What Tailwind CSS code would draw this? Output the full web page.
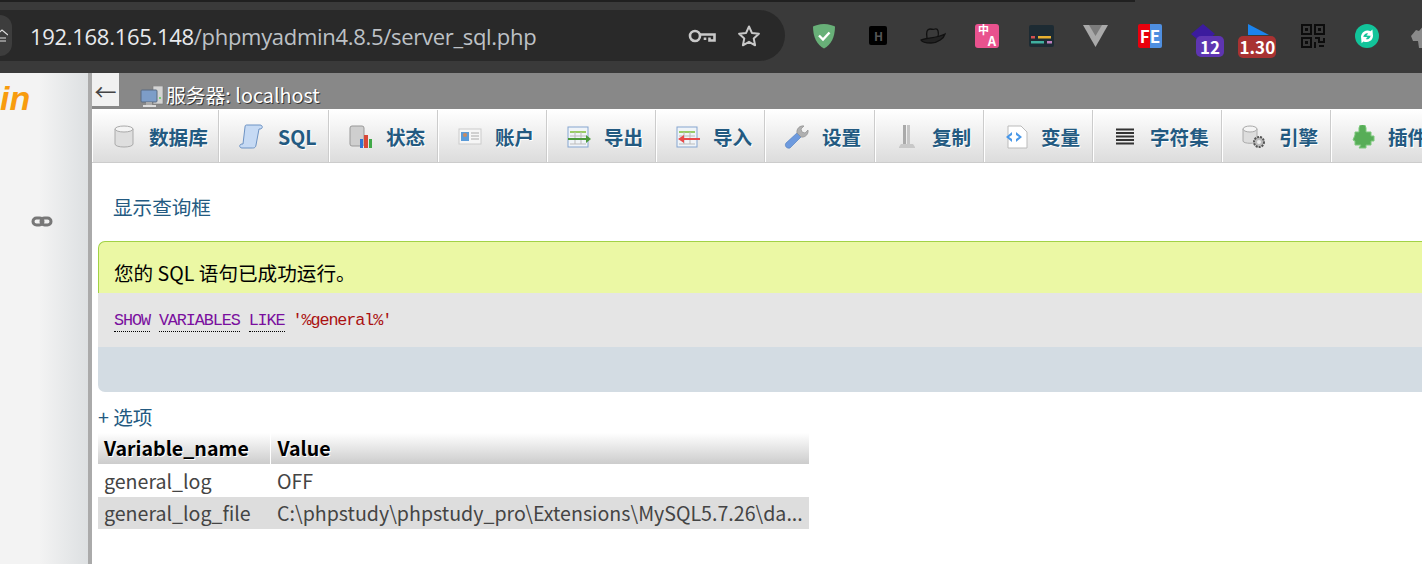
<!DOCTYPE html>
<html lang="zh-CN">
<head>
  <meta charset="UTF-8" />
  <title>phpMyAdmin - server_sql</title>
  <script src="https://cdn.jsdelivr.net/npm/@tailwindcss/browser@4"></script>
</head>
<body class="bg-white overflow-hidden font-['Noto_Sans_CJK_SC','Noto_Sans',sans-serif]">
<div class="flex flex-col w-[1422px] h-[564px] overflow-hidden">

  <!-- browser toolbar -->
  <header class="relative flex items-center shrink-0 h-[73px] bg-[#3a3a3a]">
    <div class="absolute top-0 left-0 w-[1135px] h-[2px] bg-[#202020]"></div>
    <div class="flex items-center shrink-0 w-[785px] h-[51px] -mt-[2px] rounded-r-[26px] bg-[#292929]">
      <div class="flex items-center justify-start shrink-0 w-[12px] h-[41px] rounded-r-full bg-[#3d3d3d] overflow-hidden">
        <svg width="8" height="16" viewBox="0 0 8 16" fill="none" stroke="#ddd" stroke-width="1.2"><path d="M-4 7 L2 2 L8 7M-2 10H6M-2 13H6"/></svg>
      </div>
      <div class="ml-[18px] text-[22px] leading-none tracking-[-0.3px] text-[#bdc1c6] font-['Open_Sans',sans-serif] whitespace-nowrap"><span class="text-[#e8eaed]">192.168.165.148</span>/phpmyadmin4.8.5/server_sql.php</div>
      <svg class="ml-auto" width="28" height="16" viewBox="0 0 28 16" fill="none" stroke="#c8c8c8" stroke-width="2.6"><circle cx="7" cy="8" r="5"/><path d="M12 6.500H26.500V12.500H21.500V9.500M17 9.500V12"/></svg>
      <svg class="ml-[21px] mr-[24px]" width="24" height="24" viewBox="0 0 24 24" fill="none" stroke="#c8c8c8" stroke-width="2" stroke-linejoin="round"><path d="M12 2.500l2.900 6.400 7 .8-5.200 4.700 1.400 6.900-6.100-3.500-6.100 3.500 1.400-6.900L2.100 9.700l7-.8z"/></svg>
    </div>

    <div class="flex items-center -mt-[2px] ml-[12px] shrink-0">
      <div class="flex justify-center w-[54.3px]">
        <svg width="24" height="26" viewBox="0 0 24 26"><path d="M12 1C7 1 3 2.500 1 3.500 1 14 5 22 12 25.500 19 22 23 14 23 3.500 21 2.500 17 1 12 1z" fill="#68b078"/><path d="M7 12.500l4 4 6.500-7" fill="none" stroke="#fff" stroke-width="2.400"/></svg>
      </div>
      <div class="flex justify-center w-[54.3px]">
        <div class="flex items-center justify-center w-[18px] h-[19px] rounded-[2px] bg-black text-[12px] leading-none font-bold text-[#555]">H</div>
      </div>
      <div class="flex justify-center w-[54.3px]">
        <svg width="26" height="18" viewBox="0 0 26 18" fill="none" stroke="#111" stroke-width="1.300"><path d="M7 11C6 5 7 2 10 2c2 0 3 1 5 0 3-1 4 3 3 8"/><path d="M1 13c4-2 17-2 24-6-1 4-7 9-14 9-5 0-9-1-10-3z" fill="#222"/></svg>
      </div>
      <div class="flex justify-center w-[54.3px]">
        <div class="flex flex-col justify-center w-[24px] h-[24px] px-[3px] rounded-[3px] bg-[#e9528e] text-white font-bold">
          <span class="self-start text-[11px] leading-[11px]">中</span>
          <span class="self-end text-[13px] leading-[12px]">A</span>
        </div>
      </div>
      <div class="flex justify-center w-[54.3px]">
        <svg width="25" height="22" viewBox="0 0 25 22"><rect width="25" height="22" rx="2" fill="#1d2b33"/><rect x="2" y="11" width="4" height="2.500" fill="#d05050"/><rect x="9" y="11" width="13" height="2.500" fill="#e8b030"/><rect x="2" y="16" width="13" height="2.500" fill="#40b0a0"/><rect x="18" y="16" width="5" height="2.500" fill="#c080c0"/></svg>
      </div>
      <div class="flex justify-center w-[54.3px]">
        <svg width="25" height="23" viewBox="0 0 25 23"><path d="M0 1H25L12.500 23z" fill="#a9a9a9"/><path d="M6 1H19L12.500 12z" fill="#7c7c7c"/></svg>
      </div>
      <div class="flex justify-center w-[54.3px]">
        <div class="flex items-center justify-center w-[24px] h-[24px] rounded-[2px] bg-[linear-gradient(90deg,#e8000d_50%,#4f8fe0_50%)] text-white text-[17px] leading-none font-bold">FE</div>
      </div>
      <div class="relative flex justify-center items-start w-[54.3px] h-[24px]">
        <svg class="mr-[3px]" width="24" height="20" viewBox="0 0 24 20"><path d="M12 0L24 10 12 20 0 10z" fill="#3b1b9e"/></svg>
        <span class="absolute left-[19px] top-[12px] flex items-center justify-center w-[28px] h-[21px] rounded-[5px] bg-[#5e35b1] text-white text-[17px] leading-none font-bold">12</span>
      </div>
      <div class="relative flex justify-center items-start w-[54.3px] h-[24px]">
        <svg width="21" height="12" viewBox="0 0 21 12"><path d="M0 0L21 11H0z" fill="#1b84ee"/></svg>
        <span class="absolute left-[7px] top-[12px] flex items-center justify-center w-[38px] h-[22px] rounded-[5px] bg-[#a83232] text-white text-[17px] leading-none font-bold">1.30</span>
      </div>
      <div class="flex justify-center w-[54.3px]">
        <svg width="24" height="24" viewBox="0 0 24 24" fill="none" stroke="#0c0c0c" stroke-width="2"><rect x="1" y="1" width="9" height="9"/><rect x="14" y="1" width="9" height="9"/><rect x="1" y="14" width="9" height="9"/><path d="M14 14h4v4h5v-4M14 18v6M18 22h5" /><rect x="4" y="4" width="3" height="3" fill="#0c0c0c" stroke="none"/><rect x="17" y="4" width="3" height="3" fill="#0c0c0c" stroke="none"/><rect x="4" y="17" width="3" height="3" fill="#0c0c0c" stroke="none"/></svg>
      </div>
      <div class="flex justify-center w-[54.3px]">
        <svg width="24" height="24" viewBox="0 0 20 20"><circle cx="10" cy="10" r="10" fill="#12c49a"/><path d="M5 11a5.500 5.500 0 0 1 8-5l1.500-1.500 .5 5.500-5.500-.5 1.500-1.500a3 3 0 0 0-4 2.500zM15 9.500a5.500 5.500 0 0 1-8 5L5.500 16l-.5-5.500 5.500.5L9 12.500a3 3 0 0 0 4-2.500z" fill="#fff"/></svg>
      </div>
      <div class="flex justify-center w-[54.3px]">
        <svg width="22" height="24" viewBox="0 0 22 24"><path d="M1 12L6 6 9 7 14 1 15 6 21 10 20 24H9L8 17 3 17z" fill="#8a8a8a"/></svg>
      </div>
    </div>
  </header>

  <div class="flex flex-1 min-h-0">
    <!-- navigation panel -->
    <aside class="relative shrink-0 w-[92px] border-r-[4px] border-r-[#aaa] bg-[linear-gradient(90deg,#f3f3f3_45%,#dde0e2_100%)]">
      <div class="absolute left-0 top-[7px] text-[34px] leading-[36px] font-bold italic text-[#f89c0e] font-['Liberation_Sans',sans-serif]">in</div>
      <svg class="absolute left-[31px] top-[143px]" width="22" height="11" viewBox="0 0 22 11" fill="none" stroke="#777" stroke-width="3"><rect x="2" y="2" width="10" height="7" rx="3.500"/><rect x="10" y="2" width="10" height="7" rx="3.500"/></svg>
    </aside>

    <main class="flex-1 min-w-0 overflow-hidden">
      <!-- server breadcrumb -->
      <div class="flex h-[36px] bg-[#888]">
        <div class="flex items-center justify-center w-[27px] h-[33px] bg-[#f1f1f1] text-[#444] text-[22px] leading-none">←</div>
        <div class="flex items-end ml-[21px]">
          <svg class="mb-[1px] mr-[2px]" width="24" height="22" viewBox="0 0 24 22"><rect x="13" y="0" width="10" height="18" fill="#d4d4d4" stroke="#777" stroke-width=".6"/><circle cx="20" cy="12" r="1" fill="#5c5"/><rect x="1" y="4" width="16" height="12" rx="1" fill="#7d9dc8" stroke="#5a6b80"/><rect x="6" y="16" width="6" height="3" fill="#aaa"/><rect x="3" y="19" width="13" height="2" fill="#ddd"/></svg>
          <span class="text-[19.800px] leading-[29px] text-white [text-shadow:1px_1px_0_#333]">服务器: localhost</span>
        </div>
      </div>

      <!-- top menu -->
      <nav id="topmenu" class="flex mt-[1px] h-[53px] border-b border-b-[#ccc] bg-[linear-gradient(#fff,#dcdcdc)] text-[19.600px] font-bold text-[#235a81] [text-shadow:1px_1px_0_#fff] whitespace-nowrap"></nav>

      <div class="pl-[6px]">
        <a class="block mt-[30px] ml-[15px] text-[19.600px] leading-[28px] text-[#235a81]">显示查询框</a>

        <!-- success message -->
        <div class="mt-[20px] w-[1400px]">
          <div class="flex items-center h-[52px] pl-[15px] pt-[10px] rounded-tl-[7px] border-t border-l border-[#a2d246] bg-[#ebf8a4] text-[19.600px] text-black">您的 SQL 语句已成功运行。</div>
          <div class="flex items-center gap-[9px] h-[54px] pl-[16px] pt-[1px] bg-[#e5e5e5] font-['Liberation_Mono','DejaVu_Sans_Mono',monospace] text-[16.800px] text-[#7a0f9e] tracking-[-1.100px]">
            <span class="border-b border-dotted border-black leading-[21px]">SHOW</span>
            <span class="border-b border-dotted border-black leading-[21px]">VARIABLES</span>
            <span class="border-b border-dotted border-black leading-[21px]">LIKE</span>
            <span class="-ml-[1px] text-[#aa1111]">'%general%'</span>
          </div>
          <div class="h-[45px] rounded-bl-[7px] bg-[#d3dce3]"></div>
        </div>

        <a class="block mt-[11px] text-[19.600px] leading-[28px] text-[#235a81]">+ 选项</a>

        <!-- result table -->
        <table class="w-[711px] mt-[2px] border-collapse text-[19.600px]">
          <thead>
            <tr class="h-[31px] bg-[linear-gradient(#fff,#ccc)] text-black text-left [text-shadow:1px_1px_0_#fff]">
              <th class="w-[172px] pl-[6px] pb-[1px] border-r-[1px] border-r-white font-bold leading-[26px]">Variable_name</th>
              <th class="pl-[7px] pb-[1px] font-bold leading-[26px]">Value</th>
            </tr>
          </thead>
          <tbody class="text-[#444]">
            <tr class="h-[33px] bg-white">
              <td class="pl-[6px] pt-[1px] leading-[26px]">general_log</td>
              <td class="pl-[7px] pt-[1px] leading-[26px]">OFF</td>
            </tr>
            <tr class="h-[32px] bg-[#ddd]">
              <td class="pl-[6px] leading-[26px]">general_log_file</td>
              <td class="pl-[7px] leading-[26px] whitespace-nowrap">C:\phpstudy\phpstudy_pro\Extensions\MySQL5.7.26\da...</td>
            </tr>
          </tbody>
        </table>
      </div>
    </main>
  </div>
</div>

<script>
  const tabs = [
    [127, '数据库', 12, '<svg width="20" height="23" viewBox="0 0 20 23"><path d="M1 4v15c0 4 18 4 18 0V4z" fill="#dedede" stroke="#aaa"/><ellipse cx="10" cy="4" rx="9" ry="3" fill="#f4f4f4" stroke="#aaa"/></svg>'],
    [110, 'SQL', 14, '<svg width="24" height="25" viewBox="0 0 24 25"><path d="M6 3C6 1 7 1 8 1H21C24 1 24 5 21 5H20L17 21C16.500 24 15 24 13 24H3C0 24 0 20 3 20H4z" fill="#c6daf4" stroke="#6d93c4"/></svg>'],
    [109, '状态', 12, '<svg width="24" height="24" viewBox="0 0 24 24"><rect x="1" y="1" width="14" height="20" rx="2" fill="#cfcfcf" stroke="#999"/><rect x="11" y="14" width="3" height="9" fill="#3273d6"/><rect x="15" y="10" width="4" height="13" fill="#d84838"/><rect x="20" y="14" width="3" height="9" fill="#41a948"/></svg>'],
    [109, '账户', 12, '<svg width="24" height="18" viewBox="0 0 24 18"><rect x="1" y="1" width="22" height="15" fill="#f6f6f6" stroke="#ccc"/><rect x="3" y="4" width="8" height="9" fill="#5b9bd8"/><circle cx="7" cy="7" r="2" fill="#c98a60"/><path d="M13 5h8M13 8h8M13 11h8" stroke="#aaa"/></svg>'],
    [109, '导出', 12, '<svg width="24" height="22" viewBox="0 0 24 22"><rect x="1" y="1" width="20" height="20" fill="#f0f4f8" stroke="#85a5d0"/><path d="M3 6h16" stroke="#9c6" stroke-width="2"/><path d="M3 10h16M3 18h16M8 6v12M14 6v12" stroke="#bbb"/><path d="M1 12h18V9l5 4-5 4v-3H1z" fill="#4c9a3c"/></svg>'],
    [109, '导入', 12, '<svg width="24" height="22" viewBox="0 0 24 22"><rect x="1" y="1" width="20" height="20" fill="#f0f4f8" stroke="#85a5d0"/><path d="M3 6h16" stroke="#9c6" stroke-width="2"/><path d="M3 10h16M3 18h16M8 6v12M14 6v12" stroke="#bbb"/><path d="M24 12H8V9l-6 4 6 4v-3h16z" fill="#e84a4a"/></svg>'],
    [110, '设置', 12, '<svg width="25" height="24" viewBox="0 0 25 24"><path d="M2 18L14 7l4 4L6 23C3 24 0 21 2 18z" fill="#6d9ade" stroke="#4a78bb" stroke-width=".6"/><path d="M13 8c-1-4 3-8 7-7l-3 3 1 3 3 1 3-3c1 4-3 8-7 7z" fill="#b0b0b0" stroke="#888" stroke-width=".6"/></svg>'],
    [109, '复制', 12, '<svg width="18" height="24" viewBox="0 0 18 24"><rect x="5" y="0" width="3" height="19" fill="#aaa"/><rect x="9" y="0" width="3" height="19" fill="#c6c6c6"/><path d="M3 19h12l2 3v1H1v-1z" fill="#c8c8c8"/></svg>'],
    [109, '变量', 12, '<svg width="24" height="24" viewBox="0 0 24 24"><path d="M4 1H17L23 7V23H4z" fill="#fff" stroke="#bbb"/><path d="M8 7L2 12l6 5v-3l-3-2 3-2zM12 7l6 5-6 5v-3l3-2-3-2z" fill="#4a98e8"/></svg>'],
    [129, '字符集', 12, '<svg width="18" height="18" viewBox="0 0 18 18"><path d="M0 1.500h18M0 5h18M0 8.500h18M0 12h18M0 15.500h18" stroke="#333" stroke-width="2"/></svg>'],
    [109, '引擎', 12, '<svg width="24" height="24" viewBox="0 0 24 24"><path d="M1 4v12c0 3 14 3 14 0V4z" fill="#ddd" stroke="#aaa"/><ellipse cx="8" cy="4" rx="7" ry="3" fill="#f4f4f4" stroke="#aaa"/><circle cx="17" cy="17" r="5" fill="#bbb" stroke="#555" stroke-width="2" stroke-dasharray="2 1"/><circle cx="17" cy="17" r="2" fill="#eee"/></svg>'],
    [109, '插件', 12, '<svg width="24" height="24" viewBox="0 0 24 24"><path d="M8 7V3a3 3 0 0 1 7 0v4h5v4h3v5h-3v4h-5v3H8l2-3H4v-4l-2-1 2-5V7z" fill="#57ad57" stroke="#7cc87c"/></svg>']
  ];
  document.getElementById('topmenu').innerHTML = tabs.map(([w, label, gap, icon]) => `
    <a class="flex items-center shrink-0 pt-[1px] border-r border-r-[#ccc] border-l border-l-white" style="width:${w}px">
      <span class="flex items-center justify-center shrink-0 ml-[17px] w-[27px]" style="margin-right:${gap}px">${icon}</span>${label}
    </a>`).join('');
</script>
</body>
</html>
